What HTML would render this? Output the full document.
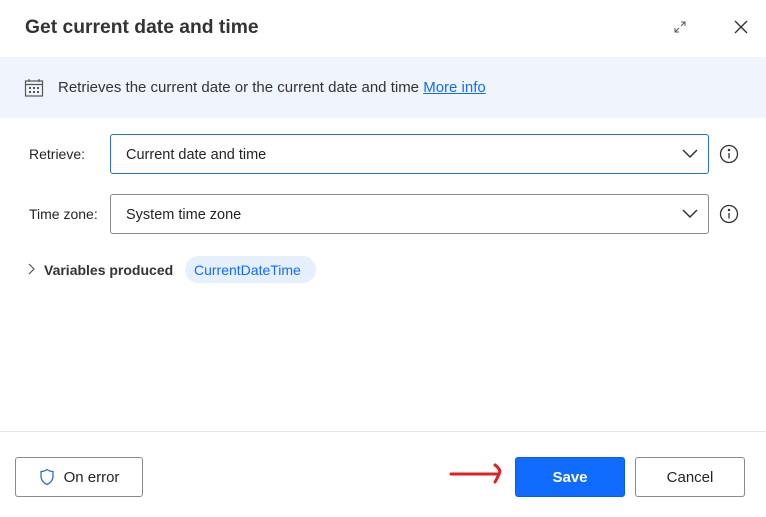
<!DOCTYPE html>
<html><head><style>
*{box-sizing:border-box;margin:0;padding:0}
body{width:766px;height:517px;background:#fff;font-family:"Liberation Sans",sans-serif;color:#242424;position:relative;overflow:hidden}
.abs{position:absolute}
.title{left:25px;top:17px;font-size:19.3px;font-weight:bold;color:#333}
.banner{left:0;top:57px;width:766px;height:61px;background:#f0f5fd}
.lbl{font-size:14px;color:#242424}
.sel{border:1px solid #8a8a8a;border-radius:3px;height:40px;width:599px;left:110px;font-size:14.5px;padding:12px 15px}
.sel.f{border-color:#2b6cd8}
.btn{border:1px solid #8a8a8a;border-radius:3px;height:40px;font-size:15px;display:flex;align-items:center;justify-content:center}
</style></head><body>
<div class="abs title">Get current date and time</div>
<svg class="abs" style="left:674px;top:21px" width="12" height="12" viewBox="0 0 12 12" stroke="#555" fill="none" stroke-width="1"><path d="M7 1h4v4M11 1L7 5M1 7v4h4M1 11l4-4"/></svg>
<svg class="abs" style="left:734px;top:20px" width="14" height="14" viewBox="0 0 14 14" stroke="#333" stroke-width="1.4"><path d="M1 1l12 12M13 1L1 13"/></svg>
<div class="abs banner"></div>
<svg class="abs" style="left:24px;top:78px" width="20" height="20" viewBox="0 0 20 20" fill="none" stroke="#555" stroke-width="1.2"><rect x="1.5" y="3" width="17" height="15"/><path d="M1.5 6.5h17M5 1v3M15 1v3"/><g fill="#555" stroke="none"><rect x="5" y="9" width="2" height="2"/><rect x="9" y="9" width="2" height="2"/><rect x="13" y="9" width="2" height="2"/><rect x="5" y="13" width="2" height="2"/><rect x="9" y="13" width="2" height="2"/><rect x="13" y="13" width="2" height="2"/></g></svg>
<div class="abs" style="left:58px;top:79px;font-size:15px;color:#333">Retrieves the current date or the current date and time <span style="color:#0f6cff;text-decoration:underline">More info</span></div>
<div class="abs lbl" style="left:29px;top:146px">Retrieve:</div>
<div class="abs sel f" style="top:134px">Current date and time</div>
<div class="abs lbl" style="left:29px;top:206px">Time zone:</div>
<div class="abs sel" style="top:194px">System time zone</div>
<svg class="abs" style="left:681px;top:147px" width="18" height="12" viewBox="0 0 18 12" fill="none" stroke="#333" stroke-width="1.5"><path d="M2 3l7 7 7-7"/></svg>
<svg class="abs" style="left:681px;top:207px" width="18" height="12" viewBox="0 0 18 12" fill="none" stroke="#333" stroke-width="1.5"><path d="M2 3l7 7 7-7"/></svg>
<svg class="abs" style="left:719px;top:144px" width="20" height="20" viewBox="0 0 20 20" fill="none" stroke="#333" stroke-width="1.3"><circle cx="10" cy="10" r="8.5"/><path d="M10 9v5.5"/><circle cx="10" cy="6" r=".6" fill="#333"/></svg>
<svg class="abs" style="left:719px;top:204px" width="20" height="20" viewBox="0 0 20 20" fill="none" stroke="#333" stroke-width="1.3"><circle cx="10" cy="10" r="8.5"/><path d="M10 9v5.5"/><circle cx="10" cy="6" r=".6" fill="#333"/></svg>
<svg class="abs" style="left:27px;top:263px" width="8" height="12" viewBox="0 0 8 12" fill="none" stroke="#555" stroke-width="1.2"><path d="M2 1l5 5-5 5"/></svg>
<div class="abs" style="left:44px;top:262px;font-size:14px;font-weight:bold;color:#333">Variables produced</div>
<div class="abs" style="left:185px;top:256px;height:27px;width:131px;border-radius:14px;background:#e6effc;color:#0f6cff;font-size:14px;padding:6px 9px">CurrentDateTime</div>
<div class="abs" style="left:0;top:431px;width:766px;height:1px;background:#e6e6e6"></div>
<div class="abs btn" style="left:15px;top:457px;width:128px"><svg width="16" height="18" viewBox="0 0 16 18" fill="none" stroke="#2b6cd8" stroke-width="1.3" style="margin-right:9px"><path d="M8 1.5c2 1.5 4 2 6 2v5c0 4-3 6.5-6 8-3-1.5-6-4-6-8v-5c2 0 4-.5 6-2z"/></svg>On error</div>
<svg class="abs" style="left:448px;top:462px" width="58" height="24" viewBox="0 0 58 24" fill="none" stroke="#e02020" stroke-width="3" stroke-linecap="round"><path d="M3 12h47M47 3c4 3 6 6 4 9-1 3-3 6-4 8"/></svg>
<div class="abs btn" style="left:515px;top:457px;width:110px;background:#0f6cff;border-color:#0a5fe0;color:#fff;font-weight:bold">Save</div>
<div class="abs btn" style="left:635px;top:457px;width:110px">Cancel</div>
</body></html>
